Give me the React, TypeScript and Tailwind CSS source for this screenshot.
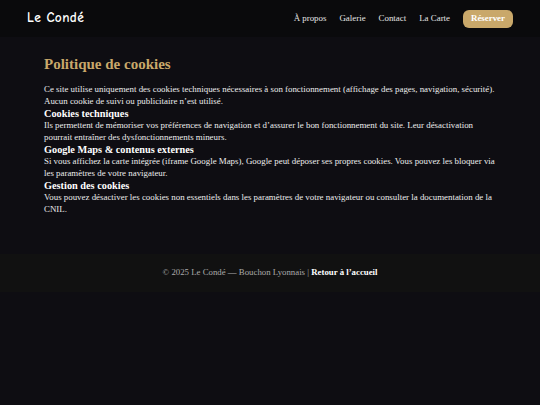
import React from "react";

export default function App() {
  const serif = { fontFamily: '"Liberation Serif", "Times New Roman", serif' };
  return (
    <div className="min-h-[405px] bg-[#0e0d12] text-white" style={serif}>
      <header className="h-[37px] bg-[#0a0a0c] flex items-center justify-between pl-[27px] pr-[27px]">
        <div className="text-[13.4px] font-bold text-white tracking-[0.4px]" style={{ fontFamily: '"Comic Sans MS", "Comic Neue", cursive' }}>
          Le Condé
        </div>
        <nav className="flex items-center gap-[13px] text-[8.9px] text-[#e5e5e5]">
          <a>À propos</a>
          <a>Galerie</a>
          <a>Contact</a>
          <a>La Carte</a>
          <a className="bg-[#c9a86a] text-white font-bold rounded-[6px] px-[8px] h-[18px] flex items-center">Réserver</a>
        </nav>
      </header>
      <main className="px-[44px] pt-[17px] pb-[39px]">
        <h1 className="text-[15px] font-bold text-[#c9a86a] leading-[20px] mb-[10px]">Politique de cookies</h1>
        <p className="text-[8.9px] leading-[11.5px] text-[#ececec]">
          Ce site utilise uniquement des cookies techniques nécessaires à son fonctionnement (affichage des pages, navigation, sécurité). Aucun cookie de suivi ou publicitaire n’est utilisé.
        </p>
        <h2 className="text-[10.3px] font-bold leading-[13px]">Cookies techniques</h2>
        <p className="text-[8.9px] leading-[11.5px] text-[#ececec]">
          Ils permettent de mémoriser vos préférences de navigation et d’assurer le bon fonctionnement du site. Leur désactivation pourrait entraîner des dysfonctionnements mineurs.
        </p>
        <h2 className="text-[10.3px] font-bold leading-[13px]">Google Maps &amp; contenus externes</h2>
        <p className="text-[8.9px] leading-[11.5px] text-[#ececec]">
          Si vous affichez la carte intégrée (iframe Google Maps), Google peut déposer ses propres cookies. Vous pouvez les bloquer via les paramètres de votre navigateur.
        </p>
        <h2 className="text-[10.3px] font-bold leading-[13px]">Gestion des cookies</h2>
        <p className="text-[8.9px] leading-[11.5px] text-[#ececec]">
          Vous pouvez désactiver les cookies non essentiels dans les paramètres de votre navigateur ou consulter la documentation de la CNIL.
        </p>
      </main>
      <footer className="bg-[#111111] h-[38px] flex items-center justify-center text-[8.8px] text-[#aaaaaa]">
        <span>© 2025 Le Condé — Bouchon Lyonnais | <a className="text-white font-bold">Retour à l’accueil</a></span>
      </footer>
    </div>
  );
}
